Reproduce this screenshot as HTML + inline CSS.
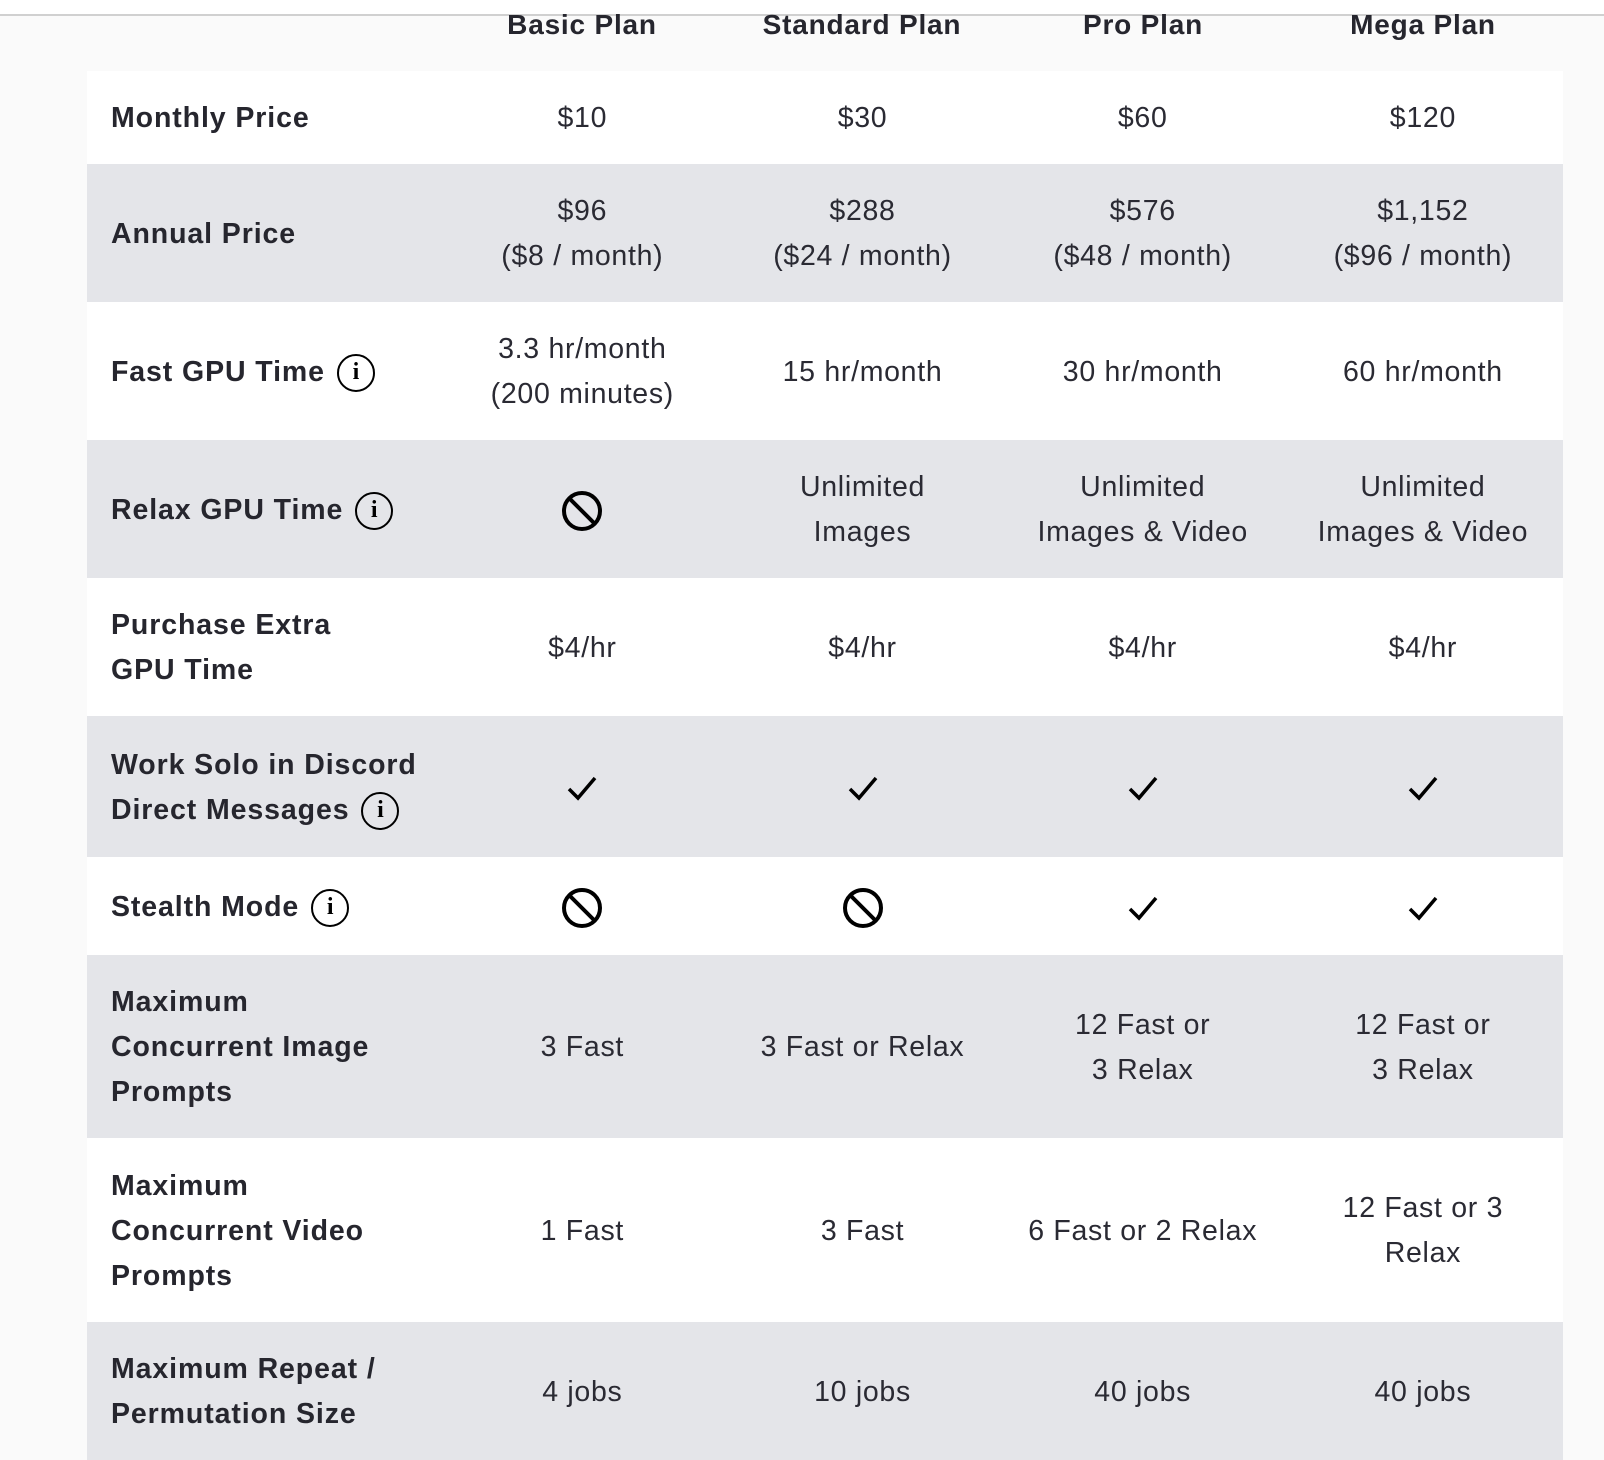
<!DOCTYPE html>
<html><head><style>
body{margin:0;width:1604px;height:1460px;background:#fafafa;overflow:hidden;font-family:"Liberation Sans",sans-serif;color:#26262e;position:relative}
.topline{position:absolute;left:0;top:0;width:1604px;height:14px;background:#fff;border-bottom:2px solid #d0d0d0}
.hdr{position:absolute;top:9px;font-weight:bold;font-size:28px;letter-spacing:0.8px;width:280px;text-align:center}
table{position:absolute;left:87px;top:71px;border-collapse:collapse;width:1476px}
td{padding:0;padding-top:2px;font-size:28.5px;letter-spacing:0.7px;line-height:45px;text-align:center;width:280px;color:#2a2a33}
td.l{text-align:left;padding-left:24px;width:331px;font-weight:bold;font-size:28.5px;letter-spacing:0.9px;color:#26262e}
tr.g td{background:#e4e5e9}
tr.w td{background:#fff}
.i{display:inline-block;width:38px;height:38px;border:2.5px solid #000;border-radius:50%;box-sizing:border-box;vertical-align:middle;margin-left:12px;font-family:"Liberation Serif",serif;font-size:24px;line-height:32px;text-align:center;font-weight:bold;color:#000;letter-spacing:0}
svg{vertical-align:middle}
</style></head><body>
<div class="topline"></div>
<div class="hdr" style="left:442px">Basic Plan</div>
<div class="hdr" style="left:722px">Standard Plan</div>
<div class="hdr" style="left:1003px">Pro Plan</div>
<div class="hdr" style="left:1283px">Mega Plan</div>
<table>
<tr class="w" style="height:93px"><td class="l">Monthly Price</td><td>$10</td><td>$30</td><td>$60</td><td>$120</td></tr>
<tr class="g" style="height:138px"><td class="l">Annual Price</td><td>$96<br>($8 / month)</td><td>$288<br>($24 / month)</td><td>$576<br>($48 / month)</td><td>$1,152<br>($96 / month)</td></tr>
<tr class="w" style="height:138px"><td class="l">Fast GPU Time<span class="i">i</span></td><td>3.3 hr/month<br>(200 minutes)</td><td>15 hr/month</td><td>30 hr/month</td><td>60 hr/month</td></tr>
<tr class="g" style="height:138px"><td class="l">Relax GPU Time<span class="i">i</span></td><td><svg width="44" height="44" viewBox="0 0 44 44"><circle cx="22" cy="22" r="18" fill="none" stroke="#000" stroke-width="4"/><line x1="9" y1="9" x2="35" y2="35" stroke="#000" stroke-width="4"/></svg></td><td>Unlimited<br>Images</td><td>Unlimited<br>Images &amp; Video</td><td>Unlimited<br>Images &amp; Video</td></tr>
<tr class="w" style="height:138px"><td class="l">Purchase Extra<br>GPU Time</td><td>$4/hr</td><td>$4/hr</td><td>$4/hr</td><td>$4/hr</td></tr>
<tr class="g" style="height:141px"><td class="l">Work Solo in Discord<br>Direct Messages<span class="i">i</span></td><td><svg width="34" height="34" viewBox="0 0 34 34"><path d="M4 18 L13 27 L30 7" fill="none" stroke="#000" stroke-width="3.5"/></svg></td><td><svg width="34" height="34" viewBox="0 0 34 34"><path d="M4 18 L13 27 L30 7" fill="none" stroke="#000" stroke-width="3.5"/></svg></td><td><svg width="34" height="34" viewBox="0 0 34 34"><path d="M4 18 L13 27 L30 7" fill="none" stroke="#000" stroke-width="3.5"/></svg></td><td><svg width="34" height="34" viewBox="0 0 34 34"><path d="M4 18 L13 27 L30 7" fill="none" stroke="#000" stroke-width="3.5"/></svg></td></tr>
<tr class="w" style="height:98px"><td class="l">Stealth Mode<span class="i">i</span></td><td><svg width="44" height="44" viewBox="0 0 44 44"><circle cx="22" cy="22" r="18" fill="none" stroke="#000" stroke-width="4"/><line x1="9" y1="9" x2="35" y2="35" stroke="#000" stroke-width="4"/></svg></td><td><svg width="44" height="44" viewBox="0 0 44 44"><circle cx="22" cy="22" r="18" fill="none" stroke="#000" stroke-width="4"/><line x1="9" y1="9" x2="35" y2="35" stroke="#000" stroke-width="4"/></svg></td><td><svg width="34" height="34" viewBox="0 0 34 34"><path d="M4 18 L13 27 L30 7" fill="none" stroke="#000" stroke-width="3.5"/></svg></td><td><svg width="34" height="34" viewBox="0 0 34 34"><path d="M4 18 L13 27 L30 7" fill="none" stroke="#000" stroke-width="3.5"/></svg></td></tr>
<tr class="g" style="height:183px"><td class="l">Maximum<br>Concurrent Image<br>Prompts</td><td>3 Fast</td><td>3 Fast or Relax</td><td>12 Fast or<br>3 Relax</td><td>12 Fast or<br>3 Relax</td></tr>
<tr class="w" style="height:184px"><td class="l">Maximum<br>Concurrent Video<br>Prompts</td><td>1 Fast</td><td>3 Fast</td><td>6 Fast or 2 Relax</td><td>12 Fast or 3<br>Relax</td></tr>
<tr class="g" style="height:138px"><td class="l">Maximum Repeat /<br>Permutation Size</td><td>4 jobs</td><td>10 jobs</td><td>40 jobs</td><td>40 jobs</td></tr>
</table>
</body></html>
